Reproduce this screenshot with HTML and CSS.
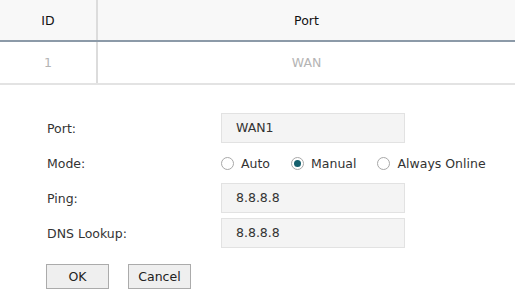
FILE: index.html
```html
<!DOCTYPE html>
<html>
<head>
<meta charset="utf-8">
<link rel="stylesheet" href="styles.css">
</head>
<body>
<table class="grid">
  <thead>
    <tr><th class="col-id">ID</th><th>Port</th></tr>
  </thead>
  <tbody>
    <tr><td class="col-id">1</td><td>WAN</td></tr>
  </tbody>
</table>
<form class="form">
  <div class="row">
    <span class="label">Port:</span>
    <div class="field">WAN1</div>
  </div>
  <div class="row">
    <span class="label">Mode:</span>
    <div class="radios">
      <label class="radio"><span class="dot"></span>Auto</label>
      <label class="radio"><span class="dot on"></span>Manual</label>
      <label class="radio"><span class="dot"></span>Always Online</label>
    </div>
  </div>
  <div class="row">
    <span class="label">Ping:</span>
    <div class="field">8.8.8.8</div>
  </div>
  <div class="row tight">
    <span class="label">DNS Lookup:</span>
    <div class="field">8.8.8.8</div>
  </div>
  <div class="buttons">
    <button type="button" class="btn">OK</button>
    <button type="button" class="btn">Cancel</button>
  </div>
</form>
</body>
</html>
```
FILE: styles.css
```css
html, body { margin: 0; padding: 0; background: #fff; }
body {
  font-family: "DejaVu Sans", Verdana, sans-serif;
  font-size: 12.5px;
  color: #333;
  width: 515px;
  height: 296px;
  overflow: hidden;
}
.grid {
  width: 100%;
  border-collapse: collapse;
  table-layout: fixed;
}
.grid th {
  height: 40px;
  background: #f8f8f8;
  font-weight: normal;
  color: #111;
  border-bottom: 2px solid #8c9aa8;
  padding: 0;
}
.grid td {
  height: 41px;
  color: #b4b4b4;
  text-align: center;
  border-bottom: 2px solid #e3e3e3;
  padding: 0;
}
.grid .col-id {
  width: 96px;
  border-right: 2px solid #dcdcdc;
}
.form {
  padding: 28px 0 0 47px;
}
.row {
  display: flex;
  align-items: center;
  margin-bottom: 5px;
}
.row.tight { margin-bottom: 16px; }
.label {
  width: 174px;
  flex: none;
}
.field {
  box-sizing: border-box;
  width: 184px;
  height: 30px;
  border: 1px solid #e2e2e2;
  background: #f4f4f4;
  padding-left: 14px;
  line-height: 28px;
}
.radios {
  display: flex;
  align-items: center;
  height: 30px;
  gap: 21px;
}
.radio {
  display: flex;
  align-items: center;
  gap: 7px;
}
.dot {
  box-sizing: border-box;
  width: 13px;
  height: 13px;
  border-radius: 50%;
  border: 1px solid #a8a8a8;
  background: #fff;
  position: relative;
}
.dot.on::after {
  content: "";
  position: absolute;
  left: 2px;
  top: 2px;
  width: 7px;
  height: 7px;
  border-radius: 50%;
  background: #15606e;
}
.buttons {
  display: flex;
  gap: 19px;
  margin-left: -1px;
}
.btn {
  width: 63px;
  height: 25px;
  border: 1px solid #ababab;
  background: #efefef;
  font-family: inherit;
  font-size: 12.5px;
  color: #222;
  padding: 0;
}
```
